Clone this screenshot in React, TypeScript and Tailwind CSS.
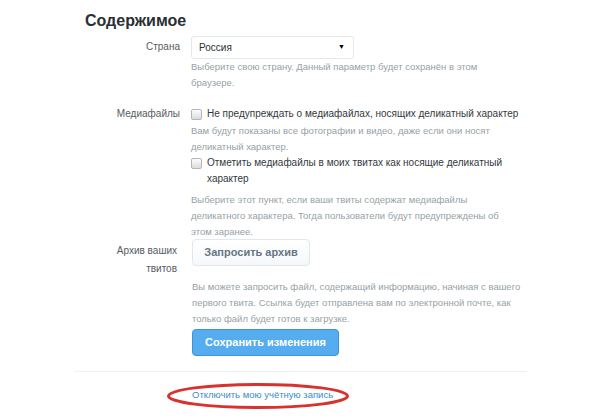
import React from "react";

function Checkbox() {
  return (
    <span className="mt-[3px] inline-block h-[11px] w-[11px] shrink-0 rounded-[2px] border border-[#b5b5b5] bg-gradient-to-b from-[#fdfdfd] to-[#dcdcdc]" />
  );
}

function Help({ lines, className }: { lines: string[]; className?: string }) {
  return (
    <p className={"whitespace-nowrap text-[9.5px] leading-[16px] text-[#979fa6] " + (className ?? "")}>
      {lines.map((l, i) => (
        <React.Fragment key={i}>
          {i > 0 && <br />}
          {l}
        </React.Fragment>
      ))}
    </p>
  );
}

export default function App() {
  return (
    <div className="h-[420px] w-[600px] overflow-hidden bg-white font-['Liberation_Sans',Arial,sans-serif]">
      <div className="relative ml-[74px] w-[453px]">
        <div className="px-[11px] pt-[10px]">
          <h2 className="text-[16px] font-bold leading-[22px] text-[#292f33]">Содержимое</h2>
        </div>

        {/* Country */}
        <div className="mt-[4px] flex">
          <div className="w-[106px] pt-[3px] text-right text-[10px] leading-[16px] text-[#555c62]">Страна</div>
          <div className="ml-[11px] flex-1">
            <div className="flex h-[23px] w-[163px] items-center justify-between rounded-[3px] border border-[#e1e8ed] bg-white pl-[7px] pr-[8px] text-[10px] text-[#292f33]">
              <span>Россия</span>
              <span className="text-[7px] text-black">▼</span>
            </div>
            <Help
              lines={["Выберите свою страну. Данный параметр будет сохранён в этом", "браузере."]}
            />
          </div>
        </div>

        {/* Media */}
        <div className="mt-[15px] flex">
          <div className="w-[106px] text-right text-[10px] leading-[16px] text-[#555c62]">Медиафайлы</div>
          <div className="ml-[11px] flex-1">
            <label className="flex gap-[5px] whitespace-nowrap text-[10px] leading-[16px] text-[#33393d]">
              <Checkbox />
              <span>Не предупреждать о медиафайлах, носящих деликатный характер</span>
            </label>
            <Help
              className="mt-[1px]"
              lines={["Вам будут показаны все фотографии и видео, даже если они носят", "деликатный характер."]}
            />
            <label className="flex gap-[5px] whitespace-nowrap text-[10px] leading-[16px] text-[#33393d]">
              <Checkbox />
              <span>
                Отметить медиафайлы в моих твитах как носящие деликатный
                <br />
                характер
              </span>
            </label>
            <Help
              className="mt-[5px]"
              lines={[
                "Выберите этот пункт, если ваши твиты содержат медиафайлы",
                "деликатного характера. Тогда пользователи будут предупреждены об",
                "этом заранее.",
              ]}
            />
          </div>
        </div>

        {/* Archive */}
        <div className="mt-[-1px] flex">
          <div className="w-[103px] pt-[3px] text-right text-[10px] leading-[18px] text-[#555c62]">
            Архив ваших
            <br />
            твитов
          </div>
          <div className="ml-[15px] flex-1">
            <button className="h-[27px] w-[118px] rounded-[4px] border border-[#e1e8ed] bg-gradient-to-b from-white to-[#f5f8fa] text-[11px] font-bold text-[#66757f]">
              Запросить архив
            </button>
            <Help
              className="mt-[13px]"
              lines={[
                "Вы можете запросить файл, содержащий информацию, начиная с вашего",
                "первого твита. Ссылка будет отправлена вам по электронной почте, как",
                "только файл будет готов к загрузке.",
              ]}
            />
            <button className="mt-[2px] block h-[27px] w-[147px] rounded-[4px] border border-[#3b94d9] bg-[#55acee] text-[11px] font-bold text-white">
              Сохранить изменения
            </button>
          </div>
        </div>

        <div className="mt-[15px] border-t border-[#eef1f3]" />

        <div className="relative pl-[118px] pt-[15px]">
          <a className="block text-[9.5px] leading-[16px] text-[#3d8cc6] no-underline">Отключить мою учётную запись</a>
          <svg className="pointer-events-none absolute left-[92px] top-[10px]" width="184" height="28" viewBox="0 0 184 28">
            <ellipse cx="92" cy="14" rx="89.5" ry="11.5" fill="none" stroke="#d8322f" strokeWidth="3" />
          </svg>
        </div>
      </div>
    </div>
  );
}
